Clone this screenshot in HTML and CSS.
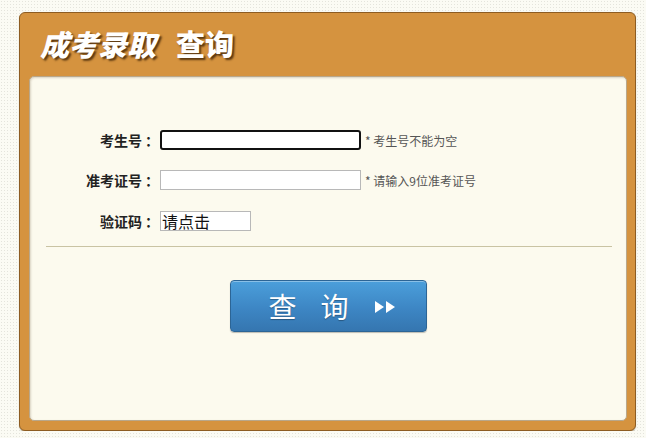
FILE: index.html
```html
<!DOCTYPE html>
<html lang="zh-CN">

<head>
    <meta charset="UTF-8">
    <meta name="viewport" content="width=device-width, initial-scale=1.0">
    <title>成考录取查询</title>
    <link rel="stylesheet" href="styles.css">
</head>

<body>

    <div class="box">
        <div class="box-head">
            <h1 class="title"><span class="title-em">成考录取</span>查询</h1>
        </div>

        <div class="box-body">
            <form id="queryForm" class="query-form">
                <div class="row">
                    <label class="row-label" for="ksh">考生号<span class="colon">：</span></label>
                    <input class="field field-focus" type="text" id="ksh" name="ksh">
                    <span class="hint">* 考生号不能为空</span>
                </div>
                <div class="row">
                    <label class="row-label" for="zkzh">准考证号<span class="colon">：</span></label>
                    <input class="field" type="text" id="zkzh" name="zkzh">
                    <span class="hint">* 请输入9位准考证号</span>
                </div>
                <div class="row">
                    <label class="row-label" for="yzm">验证码<span class="colon">：</span></label>
                    <input class="field field-code" type="text" id="yzm" name="yzm" value="请点击">
                </div>

                <div class="divider"></div>

                <div class="actions">
                    <button type="button" class="btn-query">
                        <span class="btn-text">查询</span>
                        <svg class="btn-arrows" width="21" height="12" viewBox="0 0 21 12">
                            <polygon points="0,0 9,6 0,12" fill="#ffffff" />
                            <polygon points="11,0 20,6 11,12" fill="#ffffff" />
                        </svg>
                    </button>
                </div>
            </form>
        </div>
    </div>

</body>

</html>
```

FILE: styles.css
```css
body {
    margin: 0;
    padding: 12px 0 0 19px;
    font-family: "Noto Sans CJK SC", "Liberation Sans", sans-serif;
    background-color: #fbfbf4;
    background-image: radial-gradient(circle, #e4e4dc 0.6px, transparent 0.8px);
    background-size: 3px 3px;
}

.box {
    box-sizing: content-box;
    width: 598px;
    height: 408px;
    padding: 0 8px 9px 9px;
    background-color: #d5933f;
    border: 1px solid #8d5c22;
    border-radius: 6px;
    box-shadow: 0 1px 1px rgba(90, 60, 20, 0.35);
    display: flex;
    flex-direction: column;
}

.box-head {
    height: 63px;
    display: flex;
    align-items: center;
    padding-left: 11px;
}

.title {
    margin: 0;
    font-size: 29px;
    font-weight: 900;
    color: #ffffff;
    text-shadow: 2px 2px 2px #5a3710;
    line-height: 1;
    padding-bottom: 2px;
}

.title-em {
    font-style: italic;
    margin-right: 20px;
}

.box-body {
    flex: 1;
    background-color: #fcfaee;
    border: 1px solid #b9a78a;
    border-radius: 5px;
    box-shadow: inset 1px 1px 2px rgba(120, 100, 70, 0.25);
}

.query-form {
    padding-top: 53px;
}

.row {
    display: flex;
    align-items: center;
    height: 20px;
    margin-bottom: 20px;
}

.row:nth-child(2) {
    margin-bottom: 21px;
}

.row-label {
    width: 129px;
    padding-right: 1px;
    text-align: right;
    font-size: 14px;
    font-weight: bold;
    color: #222222;
}

.colon {
    margin-left: 3px;
}

.field {
    box-sizing: border-box;
    width: 201px;
    height: 20px;
    margin: 0;
    padding: 0 2px;
    border: 1px solid #b8b8b8;
    background: #ffffff;
    font-family: inherit;
    font-size: 13px;
    outline: none;
}

.field-focus {
    border: 2px solid #111111;
    border-radius: 3px;
}

.field-code {
    width: 91px;
    padding: 0 1px;
    font-size: 16px;
    color: #111111;
    line-height: 18px;
}

.hint {
    margin-left: 4px;
    font-size: 12px;
    color: #555555;
}

.divider {
    height: 1px;
    margin: -5px 14px 0 16px;
    background-color: #c9c3a3;
}

.actions {
    display: flex;
    justify-content: center;
    padding-top: 33px;
}

.btn-query {
    width: 197px;
    height: 52px;
    display: flex;
    align-items: center;
    justify-content: flex-start;
    padding: 0 0 0 38px;
    border: 1px solid #2c6596;
    border-radius: 4px;
    background: linear-gradient(to bottom, #4b9fdb 0%, #3d86c4 55%, #3576b0 100%);
    box-shadow: inset 0 1px 0 rgba(255, 255, 255, 0.35), 0 1px 1px rgba(0, 0, 0, 0.25);
    color: #ffffff;
    cursor: pointer;
}

.btn-text {
    font-family: "Noto Sans CJK SC", sans-serif;
    font-size: 28px;
    letter-spacing: 24px;
    text-shadow: 0 1px 1px rgba(0, 0, 0, 0.3);
    line-height: 1;
}

.btn-arrows {
    margin-left: 2px;
    margin-top: 2px;
}
```
